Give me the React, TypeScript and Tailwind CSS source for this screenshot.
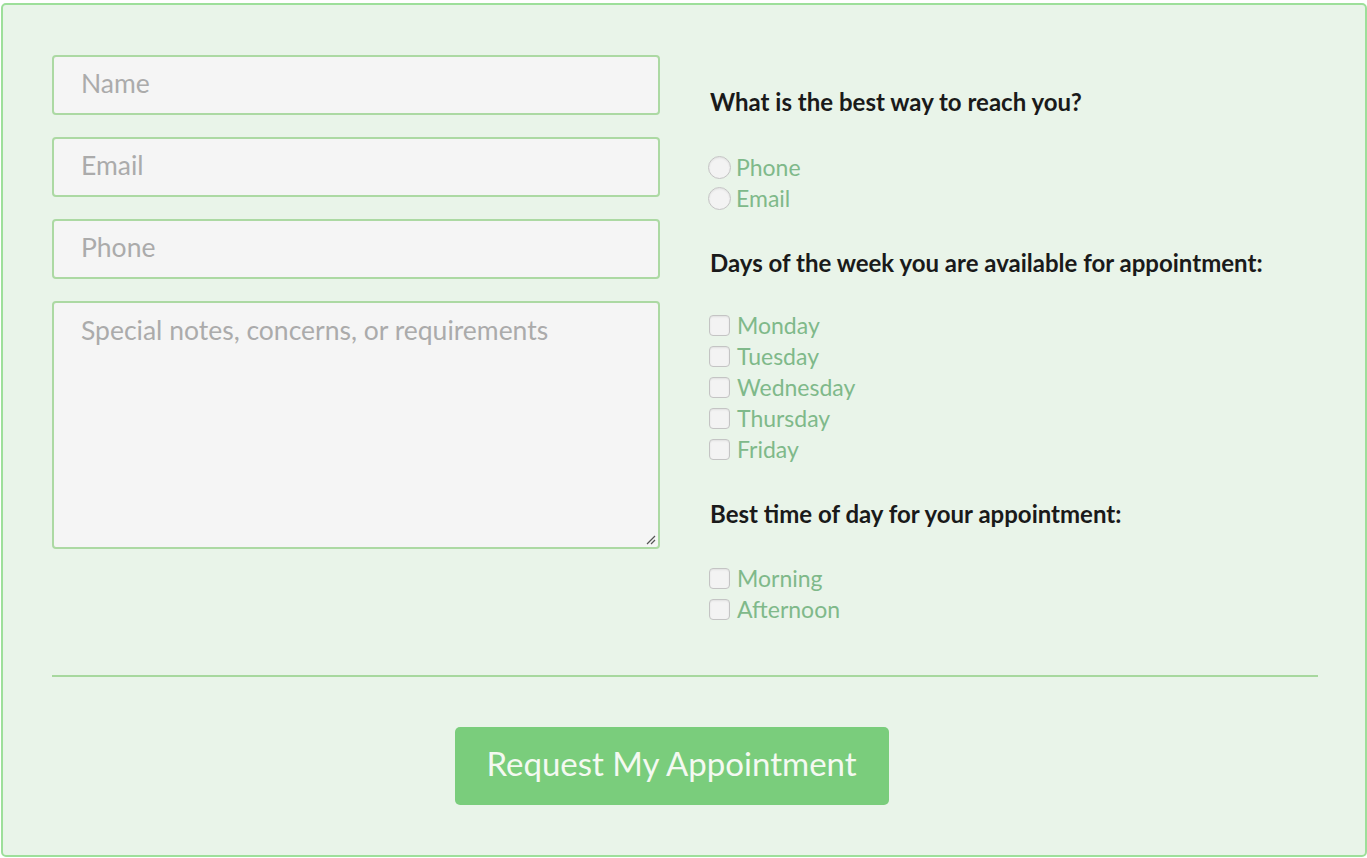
import React from "react";

const font = { fontFamily: "Lato, 'Noto Sans', sans-serif" };

function Radio({ label }: { label: string }) {
  return (
    <label className="flex items-center h-[31px]">
      <span className="w-[23px] h-[23px] rounded-full border border-[#c4c4c4] bg-[#f3f3f3] mr-[5px] ml-[-2px] shadow-[inset_0_1px_2px_rgba(0,0,0,0.08)]" />
      <span className="text-[23px] text-[#7fb98a]">{label}</span>
    </label>
  );
}

function Check({ label }: { label: string }) {
  return (
    <label className="flex items-center h-[31px]">
      <span className="w-[21px] h-[21px] rounded-[4px] border border-[#c4c4c4] bg-[#f3f3f3] mr-[7px] ml-[-1px] shadow-[inset_0_1px_2px_rgba(0,0,0,0.08)]" />
      <span className="text-[23px] text-[#7fb98a]">{label}</span>
    </label>
  );
}

export default function App() {
  return (
    <div className="w-[1367px] h-[858px] bg-white pt-[3px] pl-[1px]" style={font}>
      <div className="w-[1366px] h-[854px] bg-[#e9f4e9] border-2 border-[#9ddf9a] rounded-[5px] pt-[50px] px-[49px]">
        <div className="flex">
          <div className="w-[608px] flex flex-col gap-[22px]">
            {["Name", "Email", "Phone"].map((p) => (
              <div key={p} className="h-[60px] border-2 border-[#acd9a3] rounded-[4px] bg-[#f5f5f5] px-[27px] pb-[3px] flex items-center text-[26.5px] text-[#ababab]">
                {p}
              </div>
            ))}
            <div className="relative h-[248px] border-2 border-[#acd9a3] rounded-[4px] bg-[#f5f5f5] px-[27px] pt-[8px] text-[26.5px] text-[#ababab]">
              Special notes, concerns, or requirements
              <svg className="absolute right-[2px] bottom-[2px]" width="11" height="11" viewBox="0 0 11 11">
                <path d="M10 2 L2 10 M10 6 L6 10" stroke="#555" strokeWidth="1.2" />
              </svg>
            </div>
          </div>
          <div className="ml-[50px] pt-[32px]">
            <div className="text-[24px] font-bold text-[#1a1a1a] leading-[30px]">What is the best way to reach you?</div>
            <div className="mt-[35px]">
              <Radio label="Phone" />
              <Radio label="Email" />
            </div>
            <div className="mt-[34px] text-[24px] font-bold text-[#1a1a1a] leading-[30px]">Days of the week you are available for appointment:</div>
            <div className="mt-[32px]">
              {["Monday", "Tuesday", "Wednesday", "Thursday", "Friday"].map((d) => (
                <Check key={d} label={d} />
              ))}
            </div>
            <div className="mt-[34px] text-[24px] font-bold text-[#1a1a1a] leading-[30px]">Best time of day for your appointment:</div>
            <div className="mt-[34px]">
              <Check label="Morning" />
              <Check label="Afternoon" />
            </div>
          </div>
        </div>
        <div className="mt-[50px] h-[2px] bg-[#a7d89e] w-[1266px]" />
        <div className="flex justify-center mt-[50px] pr-[25px]">
          <button className="w-[434px] h-[78px] rounded-[5px] bg-[#7acd7c] text-[#f4f9f1] text-[33px] pb-[4px]">
            Request My Appointment
          </button>
        </div>
      </div>
    </div>
  );
}
